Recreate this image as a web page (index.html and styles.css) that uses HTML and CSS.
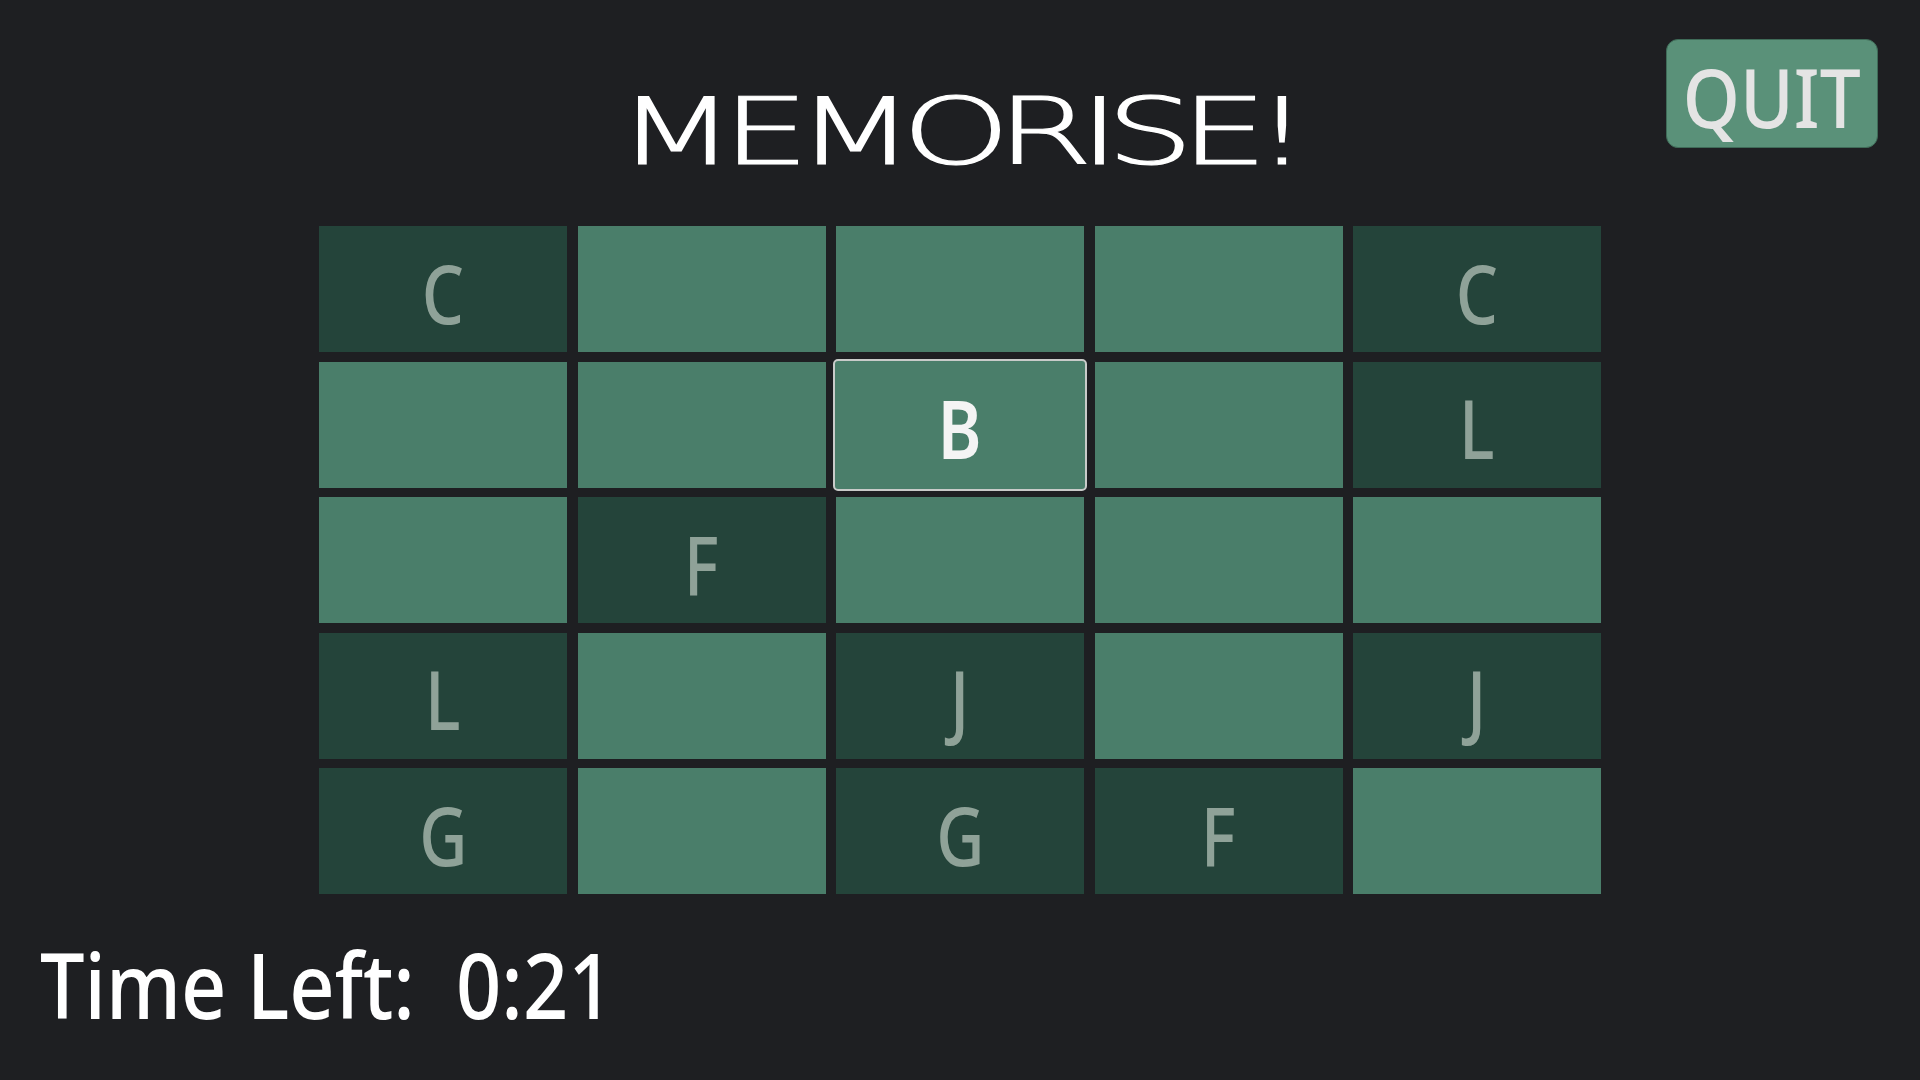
FILE: index.html
```html
<!DOCTYPE html>
<html lang="en">
<head>
<meta charset="utf-8">
<title>Memorise</title>
<link rel="stylesheet" href="styles.css">
</head>
<body>
<div class="page">
  <header class="header">
    <h1 class="title">MEMORISE!</h1>
    <button class="quit"><span class="quit-text">QUIT</span></button>
  </header>
  <main class="board">
    <div class="cell shown"><span class="letter">C</span></div>
    <div class="cell"></div>
    <div class="cell"></div>
    <div class="cell"></div>
    <div class="cell shown"><span class="letter">C</span></div>

    <div class="cell"></div>
    <div class="cell"></div>
    <div class="cell selected"><span class="letter">B</span></div>
    <div class="cell"></div>
    <div class="cell shown"><span class="letter">L</span></div>

    <div class="cell"></div>
    <div class="cell shown"><span class="letter">F</span></div>
    <div class="cell"></div>
    <div class="cell"></div>
    <div class="cell"></div>

    <div class="cell shown"><span class="letter">L</span></div>
    <div class="cell"></div>
    <div class="cell shown"><span class="letter">J</span></div>
    <div class="cell"></div>
    <div class="cell shown"><span class="letter">J</span></div>

    <div class="cell shown"><span class="letter">G</span></div>
    <div class="cell"></div>
    <div class="cell shown"><span class="letter">G</span></div>
    <div class="cell shown"><span class="letter">F</span></div>
    <div class="cell"></div>
  </main>
  <footer class="timer"><span class="timer-text">Time Left:  0:21</span></footer>
</div>
</body>
</html>
```

FILE: styles.css
```css
* {
  box-sizing: border-box;
}

html, body {
  margin: 0;
  padding: 0;
  width: 1920px;
  height: 1080px;
  overflow: hidden;
  background: #1e1f22;
}

.page {
  width: 1920px;
  height: 1080px;
  display: flex;
  flex-direction: column;
  font-family: "Noto Sans", "DejaVu Sans", sans-serif;
}

.header {
  display: grid;
  grid-template-columns: 1fr auto 1fr;
  align-items: start;
}

.title {
  grid-column: 2;
  margin: 87px 0 0 0;
  font-family: "DejaVu Sans", sans-serif;
  font-weight: 200;
  font-size: 92px;
  line-height: 92px;
  color: #ffffff;
  -webkit-text-stroke: 1.2px #ffffff;
  letter-spacing: -9px;
  transform: translateX(-4px) scaleX(1.5);
  transform-origin: center;
}

.quit {
  grid-column: 3;
  justify-self: end;
  margin: 39px 42px 0 0;
  width: 212px;
  height: 109px;
  padding: 0;
  border: 1px solid #3f6b58;
  border-radius: 12px;
  background: #5a9179;
  display: flex;
  align-items: center;
  justify-content: center;
  cursor: pointer;
}

.quit-text {
  display: block;
  font-family: "Noto Sans", sans-serif;
  font-weight: 500;
  font-size: 81px;
  line-height: 81px;
  color: #e4e4e4;
  padding-top: 6px;
  transform: scaleX(0.9);
}

.board {
  margin: 47px auto 0 auto;
  display: grid;
  grid-template-columns: repeat(5, 248px);
  grid-template-rows: repeat(5, 126px);
  column-gap: 10.5px;
  row-gap: 9.5px;
}

.cell {
  background: #4a7e6a;
  display: flex;
  align-items: center;
  justify-content: center;
}

.cell.shown {
  background: #24443a;
}

.cell.selected {
  margin: -3px;
  border: 2px solid #c8cbc9;
  border-radius: 5px;
  background: #4a7e6a;
}

.letter {
  display: block;
  font-family: "Noto Sans", sans-serif;
  font-weight: 500;
  font-size: 81px;
  line-height: 81px;
  padding-top: 6px;
  color: #8fa298;
  transform: scaleX(0.82);
}

.cell.selected .letter {
  color: #f4f4f4;
  font-weight: 600;
}

.timer {
  margin: 45px 0 0 0;
  padding-left: 40px;
}

.timer-text {
  display: block;
  white-space: pre;
  font-family: "Noto Sans", sans-serif;
  font-weight: 500;
  font-size: 90px;
  line-height: 90px;
  color: #ffffff;
  transform: scaleX(0.88);
  transform-origin: left center;
}
```
